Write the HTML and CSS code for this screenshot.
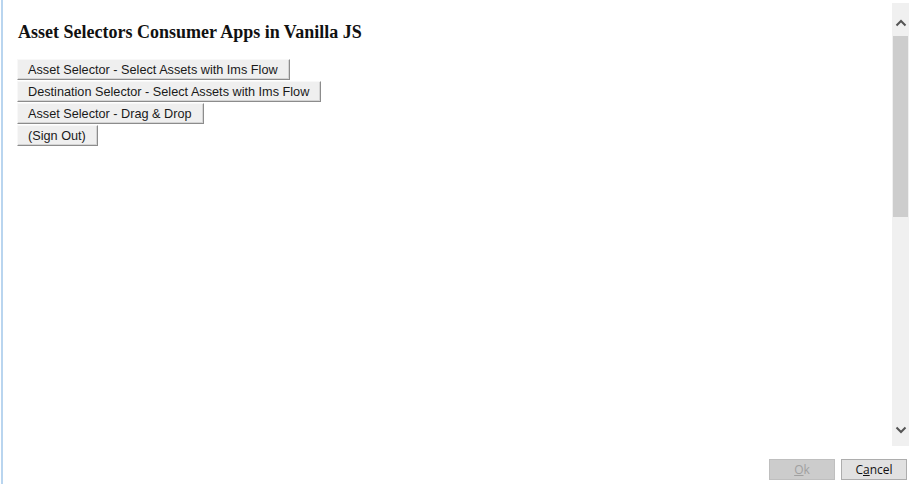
FILE: index.html
```html
<!DOCTYPE html>
<html lang="en">
<head>
    <meta charset="UTF-8">
    <title>Asset Selectors Consumer Apps in Vanilla JS</title>
    <link rel="stylesheet" href="styles.css">
</head>
<body>
    <div class="dialog">
        <div class="main">
            <div class="content">
                <h1>Asset Selectors Consumer Apps in Vanilla JS</h1>
                <div class="actions">
                    <button class="btn">Asset Selector - Select Assets with Ims Flow</button>
                    <button class="btn">Destination Selector - Select Assets with Ims Flow</button>
                    <button class="btn">Asset Selector - Drag &amp; Drop</button>
                    <button class="btn">(Sign Out)</button>
                </div>
            </div>
            <div class="scrollbar">
                <div class="arrow up">
                    <svg width="12" height="8" viewBox="0 0 12 8"><path d="M1.5 6.5 L6 2 L10.5 6.5" fill="none" stroke="#555" stroke-width="2"/></svg>
                </div>
                <div class="thumb"></div>
                <div class="track"></div>
                <div class="arrow">
                    <svg width="12" height="8" viewBox="0 0 12 8"><path d="M1.5 1.5 L6 6 L10.5 1.5" fill="none" stroke="#555" stroke-width="2"/></svg>
                </div>
            </div>
        </div>
        <div class="footer">
            <button class="dlg-btn" disabled><u>O</u>k</button>
            <button class="dlg-btn">C<u>a</u>ncel</button>
        </div>
    </div>
</body>
</html>
```

FILE: styles.css
```css
html, body {
    margin: 0;
    height: 100%;
    background: #fff;
}
body {
    padding-left: 1px;
    box-sizing: border-box;
}
.dialog {
    height: 484px;
    border-left: 2px solid #b9d5ef;
    display: flex;
    flex-direction: column;
}
.main {
    flex: 1;
    display: flex;
    padding-top: 3px;
    min-height: 0;
}
.content {
    flex: 1;
    padding: 19px 0 0 14px;
}
h1 {
    font-family: "Liberation Serif", "Times New Roman", serif;
    font-size: 18px;
    font-weight: bold;
    color: #111;
    margin: 0 0 17px 1px;
    line-height: 20px;
}
.actions {
    display: flex;
    flex-direction: column;
    align-items: flex-start;
    gap: 1px;
}
.btn {
    font-family: "Liberation Sans", Arial, sans-serif;
    font-size: 12.7px;
    color: #1a1a1a;
    height: 21px;
    padding: 0 11px 0 10px;
    background: #efefef;
    border: 1px solid;
    border-color: #f8f8f8 #8c8c8c #8c8c8c #f8f8f8;
    box-shadow: inset -1px -1px 0 #d4d4d4;
}
.scrollbar {
    width: 17px;
    margin-right: 6px;
    background: #f0f0f0;
    display: flex;
    flex-direction: column;
}
.arrow {
    height: 33px;
    display: flex;
    align-items: center;
    justify-content: center;
}
.arrow.up {
    padding-top: 6px;
    box-sizing: border-box;
}
.thumb {
    height: 181px;
    margin: 0 1px;
    background: #cdcdcd;
}
.track {
    flex: 1;
}
.footer {
    height: 38px;
    box-sizing: border-box;
    padding: 13px 8px 0 0;
    display: flex;
    justify-content: flex-end;
    align-items: flex-start;
    gap: 6px;
}
.dlg-btn {
    font-family: "Open Sans", "Noto Sans", sans-serif;
    font-size: 12px;
    width: 66px;
    height: 21px;
    padding: 0;
    background: #e1e1e1;
    border: 1px solid #adadad;
    color: #111;
}
.dlg-btn:disabled {
    background: #cccccc;
    border-color: #bfbfbf;
    color: #a0a0a0;
}
```
